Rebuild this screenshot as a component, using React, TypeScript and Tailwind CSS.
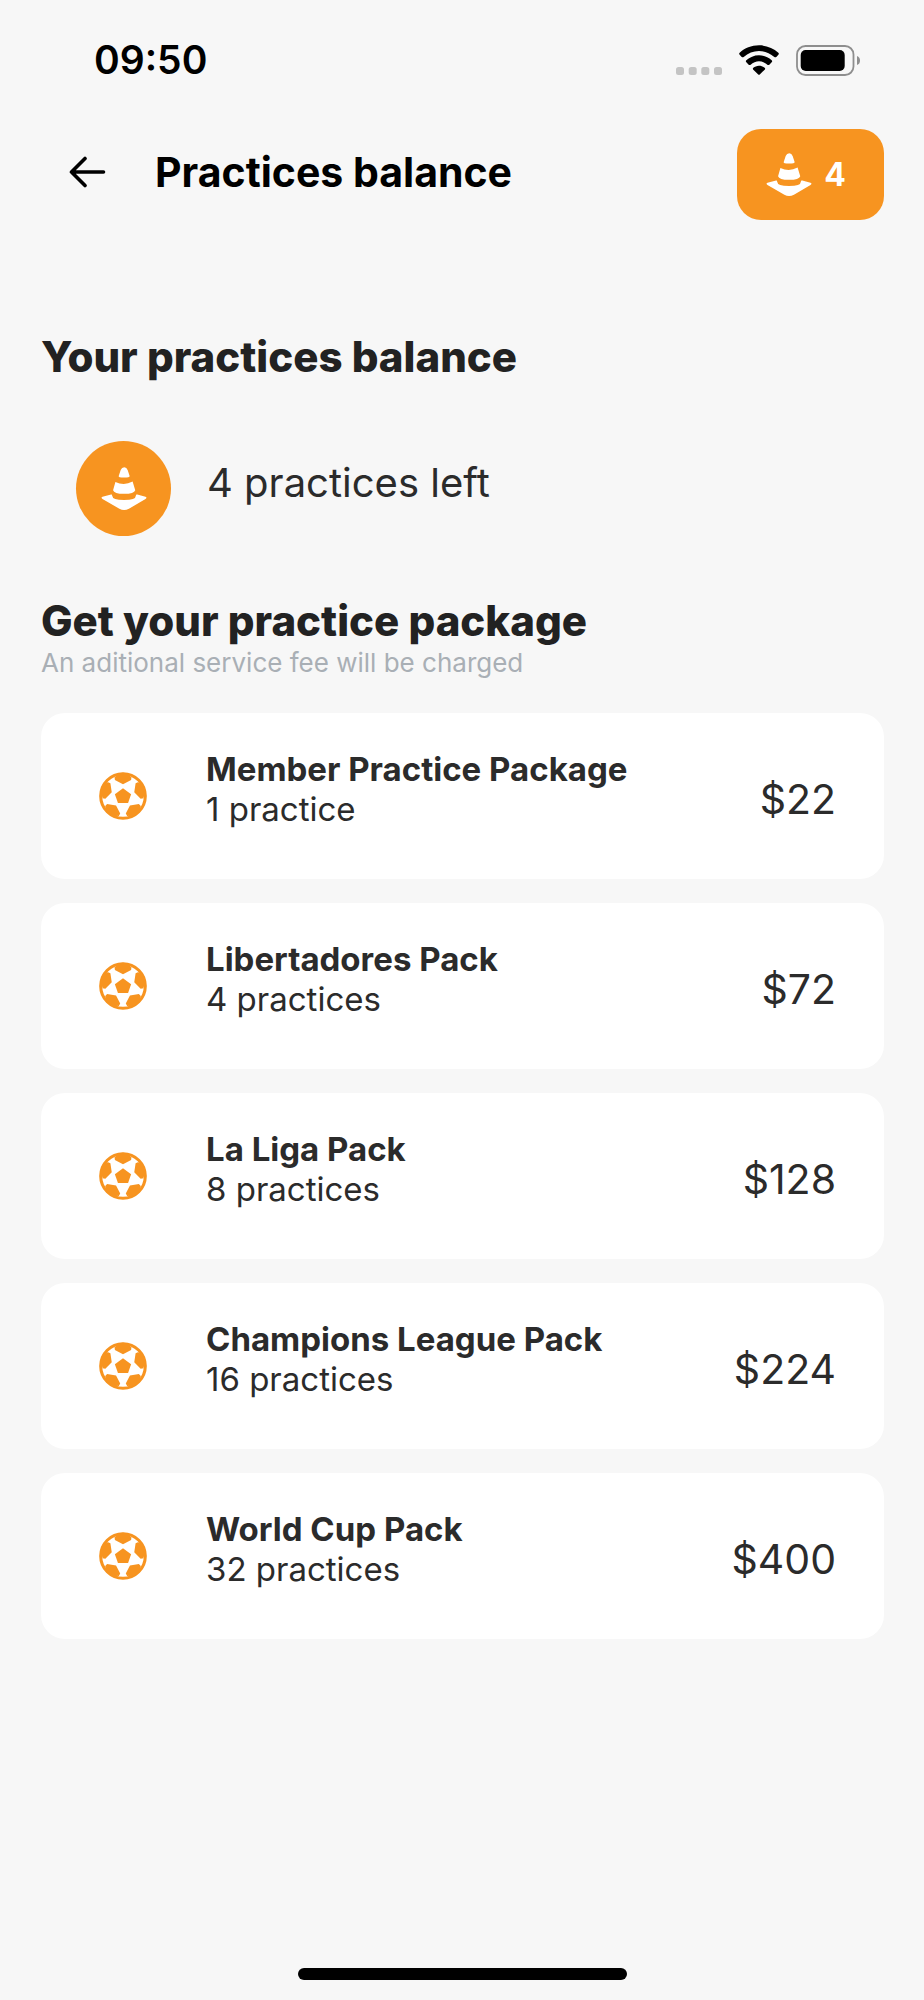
import React from 'react';

type Pack = { name: string; detail: string; price: string };

const packs: Pack[] = [
  { name: 'Member Practice Package', detail: '1 practice', price: '$22' },
  { name: 'Libertadores Pack', detail: '4 practices', price: '$72' },
  { name: 'La Liga Pack', detail: '8 practices', price: '$128' },
  { name: 'Champions League Pack', detail: '16 practices', price: '$224' },
  { name: 'World Cup Pack', detail: '32 practices', price: '$400' },
];

function ConeIcon() {
  return (
    <svg aria-hidden="true" viewBox="0 0 138 130" className="h-[43px] w-[46px] shrink-0 fill-white">
      <path d="M53 27 L59 9 Q62 1 70 1 Q77 1 80 9 L86 27 Q87 32 69 32 Q51 32 53 27Z" />
      <path d="M43 45 Q69 58 95 44 L103 70 Q100 81 69 81 Q39 81 36 70Z" />
      <path d="M30 83 Q33 82 33 86 Q34 100 69 100 Q105 100 105 86 Q105 82 109 83 L134 90 Q140 93 134 97 L84 126 Q69 134 55 126 L4 97 Q-2 93 4 90Z" />
    </svg>
  );
}

function BallIcon() {
  return (
    <svg aria-hidden="true" viewBox="-71 -71 142 142" className="size-12 shrink-0 fill-[#f79420]">
      <circle r="66" fill="none" stroke="#f79420" strokeWidth="9" />
      <path d="M0 -23 L24 -5 L15 21 H-15 L-24 -5Z" />
      {[0, 72, 144, 216, 288].map((angle) => (
        <path
          key={angle}
          transform={`rotate(${angle})`}
          d="M-24 -63 L-21 -57 L-25 -56 L-24 -47 L0 -35 L24 -47 L25 -56 L21 -57 L24 -63 Q0 -74 -24 -63Z"
        />
      ))}
    </svg>
  );
}

function StatusBar() {
  return (
    <div className="flex items-center justify-between pt-9 pr-[63px] pl-[94px]">
      <time className="text-[39px] leading-[48px] font-semibold text-black">09:50</time>
      <div className="flex items-center">
        <svg aria-hidden="true" viewBox="0 0 46 30" className="mr-[17px] h-[30px] w-[46px] fill-[#c4c4c4]">
          <rect x="0" y="22" width="8" height="8" rx="2.500" />
          <rect x="12.700" y="22" width="8" height="8" rx="2.500" />
          <rect x="25.300" y="22" width="8" height="8" rx="2.500" />
          <rect x="38" y="22" width="8" height="8" rx="2.500" />
        </svg>
        <svg aria-hidden="true" viewBox="0 0 120 90" className="mr-[17px] h-[30px] w-10 fill-black">
          <path d="M60 1 C83 1 103 10 118 23 Q121 26 118 29 L112 36 Q109 38 106 36 C93 25 77 18 60 18 C43 18 27 25 14 36 Q11 38 8 36 L2 29 Q-1 26 2 23 C17 10 37 1 60 1Z" />
          <path d="M60 31 C75 31 88 37 98 46 Q101 49 98 52 L91 59 Q88 61 85 59 C78 53 69 49 60 49 C51 49 42 53 35 59 Q32 61 29 59 L22 52 Q19 49 22 46 C32 37 45 31 60 31Z" />
          <path d="M60 62 C67 62 73 65 77 68 Q80 71 77 74 L63 88 Q60 91 57 88 L43 74 Q40 71 43 68 C47 65 53 62 60 62Z" />
        </svg>
        <svg aria-hidden="true" viewBox="0 0 65 31" className="h-[31px] w-[65px]">
          <rect x="1" y="1" width="56.500" height="29" rx="8.500" fill="none" stroke="#8e8e8e" strokeWidth="1.800" />
          <rect x="4.700" y="5" width="44" height="21" rx="5" fill="#000" />
          <path d="M61 11 Q64 12 64 15.500 Q64 19 61 20Z" fill="#8e8e8e" />
        </svg>
      </div>
    </div>
  );
}

export default function App() {
  return (
    <div className="flex min-h-screen flex-col bg-[#f7f7f7] font-['Inter','Liberation_Sans',sans-serif] text-[#2b2b2b]">
      <StatusBar />

      <header className="mt-[45px] flex items-center justify-between pr-10 pl-[68px]">
        <div className="flex items-center gap-[49px] pb-1.5">
          <button type="button" aria-label="Back">
            <svg aria-hidden="true" viewBox="0 0 38 32" className="h-8 w-[38px]" fill="none" stroke="#000" strokeWidth="3.600" strokeLinecap="round" strokeLinejoin="round">
              <path d="M35.500 16 H3.500 M17 2.500 L3.500 16 L17 29.500" />
            </svg>
          </button>
          <h1 className="text-[41px] leading-[50px] font-bold text-black">Practices balance</h1>
        </div>
        <button type="button" className="flex h-[91px] items-center gap-3 rounded-3xl bg-[#f79420] pr-[38px] pl-[29px] text-[32px] leading-10 font-bold text-white">
          <ConeIcon />
          <span>4</span>
        </button>
      </header>

      <main className="mt-28 flex-1 pr-10 pl-[41px]">
        <section>
          <h2 className="text-[42px] leading-[50px] font-extrabold text-[#222222]">Your practices balance</h2>
          <div className="mt-[59px] flex items-center gap-9 pl-[35px]">
            <div className="flex size-[95px] items-center justify-center rounded-full bg-[#f79420]">
              <ConeIcon />
            </div>
            <p className="pb-3 text-[40px] leading-[50px]">4 practices left</p>
          </div>
        </section>

        <section className="mt-[60px]">
          <h2 className="text-[42px] leading-[50px] font-extrabold text-[#222222]">Get your practice package</h2>
          <p className="mt-0.5 text-[26px] leading-[30px] text-[#a9afb5]">An aditional service fee will be charged</p>
          <ul className="mt-[35px] flex flex-col gap-6">
            {packs.map((pack) => (
              <li key={pack.name}>
                <button type="button" className="flex w-full items-center rounded-3xl bg-white pt-9 pr-12 pb-[50px] pl-[58px] text-left">
                  <span className="mt-3.5 mr-[59px]">
                    <BallIcon />
                  </span>
                  <span className="flex flex-1 flex-col text-[33px] leading-10">
                    <span className="font-bold">{pack.name}</span>
                    <span>{pack.detail}</span>
                  </span>
                  <span className="mt-5 text-[41px] leading-[50px]">{pack.price}</span>
                </button>
              </li>
            ))}
          </ul>
        </section>
      </main>

      <div className="flex justify-center pb-5">
        <div className="h-3 w-[329px] rounded-full bg-black" />
      </div>
    </div>
  );
}
